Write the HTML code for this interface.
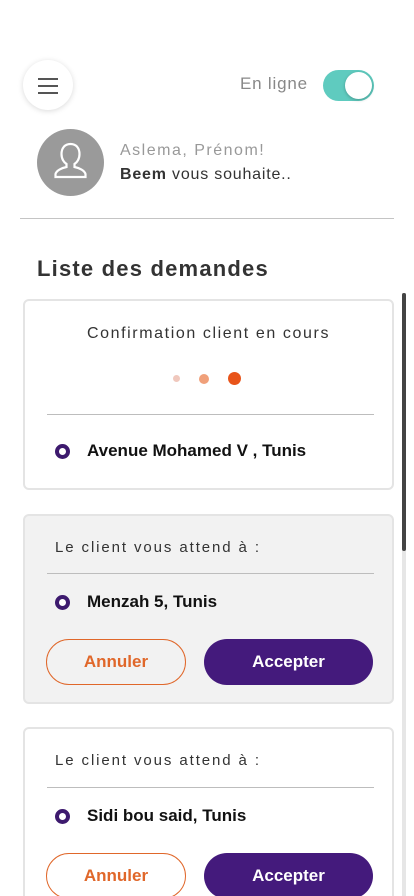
<!DOCTYPE html>
<html><head><meta charset="utf-8"><style>
*{margin:0;padding:0;box-sizing:border-box}
html,body{width:414px;height:896px;overflow:hidden}
body{background:#fff;font-family:"Liberation Sans",sans-serif;position:relative}
.a{position:absolute}
.card{position:absolute;left:23px;width:371px;border:2px solid #e4e4e4;border-radius:6px;background:#fff}
.line{position:absolute;left:22px;width:327px;height:1px;background:#bdbdbd}
.dot{position:absolute;left:30px;width:15px;height:15px;border-radius:50%;border:4.5px solid #3d1a6e;background:#fff}
.addr{position:absolute;left:62px;font-weight:bold;font-size:17px;color:#111;letter-spacing:0}
.btn{position:absolute;height:46px;border-radius:23px;font-weight:bold;font-size:17px;display:flex;align-items:center;justify-content:center}
.ann{left:21px;width:140px;border:1.5px solid #e0672a;color:#e0672a;background:transparent}
.acc{left:179px;width:169px;background:#441a7c;color:#fff}
.lbl{position:absolute;left:30px;font-size:15px;color:#333;letter-spacing:1.9px}
</style></head><body>
<div class="a" style="left:23px;top:60px;width:50px;height:50px;border-radius:50%;background:#fff;box-shadow:0 1px 6px rgba(0,0,0,.15)"></div>
<div class="a" style="left:38px;top:78px;width:20px;height:2px;background:#555"></div>
<div class="a" style="left:38px;top:85px;width:20px;height:2px;background:#555"></div>
<div class="a" style="left:38px;top:92px;width:20px;height:2px;background:#555"></div>
<div class="a" style="left:240px;top:74px;font-size:17px;color:#888;letter-spacing:0.8px">En ligne</div>
<div class="a" style="left:323px;top:70px;width:51px;height:31px;border-radius:16px;background:#5fcbbf"></div>
<div class="a" style="left:345px;top:72px;width:27px;height:27px;border-radius:50%;background:#fff;box-shadow:0 1px 3px rgba(0,0,0,.25)"></div>
<div class="a" style="left:37px;top:129px;width:67px;height:67px;border-radius:50%;background:#9a9a9a"></div>
<svg class="a" style="left:37px;top:129px" width="67" height="67" viewBox="0 0 67 67"><path d="M33.5 15c-6 0-9 4.5-9 10 0 5 2.5 8.5 5 10v3c-5 1-10 3.5-11 7v3h30v-3c-1-3.5-6-6-11-7v-3c2.5-1.5 5-5 5-10 0-5.5-3-10-9-10z" fill="none" stroke="#fff" stroke-width="2.2"/></svg>
<div class="a" style="left:120px;top:142px;font-size:16px;color:#999;letter-spacing:1.5px">Aslema, Prénom!</div>
<div class="a" style="left:120px;top:166px;font-size:16px;color:#333;letter-spacing:0.8px"><b>Beem</b> vous souhaite..</div>
<div class="a" style="left:20px;top:218px;width:374px;height:1px;background:#c4c4c4"></div>
<div class="a" style="left:37px;top:256px;font-size:22px;font-weight:bold;color:#333;letter-spacing:1.2px">Liste des demandes</div>
<div class="a" style="left:402px;top:293px;width:4px;height:603px;background:#e6e6e6"></div>
<div class="a" style="left:402px;top:293px;width:4px;height:258px;background:#444;border-radius:2px"></div>

<div class="card" style="top:299px;height:191px">
<div class="a" style="left:0;width:367px;top:24px;text-align:center;font-size:16px;color:#333;letter-spacing:1.6px">Confirmation client en cours</div>
<div class="a" style="left:148px;top:74px;width:7px;height:7px;border-radius:50%;background:#f0c8bd"></div>
<div class="a" style="left:174px;top:73px;width:10px;height:10px;border-radius:50%;background:#f0a07a"></div>
<div class="a" style="left:203px;top:71px;width:13px;height:13px;border-radius:50%;background:#e8541a"></div>
<div class="line" style="top:113px"></div>
<div class="dot" style="top:143px"></div>
<div class="addr" style="top:140px">Avenue Mohamed V , Tunis</div>
</div>

<div class="card" style="top:514px;height:190px;background:#f2f2f2">
<div class="lbl" style="top:23px">Le client vous attend à :</div>
<div class="line" style="top:57px"></div>
<div class="dot" style="top:79px"></div>
<div class="addr" style="top:76px">Menzah 5, Tunis</div>
<div class="btn ann" style="top:123px">Annuler</div>
<div class="btn acc" style="top:123px">Accepter</div>
</div>

<div class="card" style="top:727px;height:200px">
<div class="lbl" style="top:23px">Le client vous attend à :</div>
<div class="line" style="top:58px"></div>
<div class="dot" style="top:80px"></div>
<div class="addr" style="top:77px">Sidi bou said, Tunis</div>
<div class="btn ann" style="top:124px">Annuler</div>
<div class="btn acc" style="top:124px">Accepter</div>
</div>
</body></html>
